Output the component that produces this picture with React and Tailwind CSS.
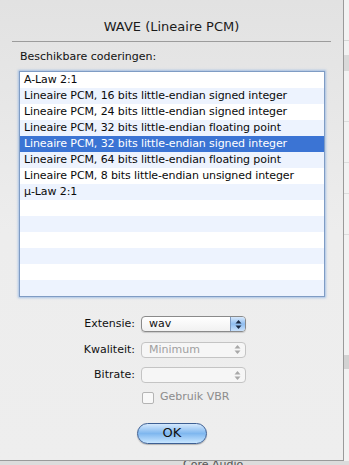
const formats = [
    "A-Law 2:1",
    "Lineaire PCM, 16 bits little-endian signed integer",
    "Lineaire PCM, 24 bits little-endian signed integer",
    "Lineaire PCM, 32 bits little-endian floating point",
    "Lineaire PCM, 32 bits little-endian signed integer",
    "Lineaire PCM, 64 bits little-endian floating point",
    "Lineaire PCM, 8 bits little-endian unsigned integer",
    "μ-Law 2:1",
    "", "", "", "", "", ""
];

const selectedIndex = 4;

function Arrows({ enabled }) {
    return (
        <svg width="7" height="11" viewBox="0 0 7 11">
            <path d="M3.5 1 L6.5 4.5 H0.5 Z" fill={enabled ? "#1b2a44" : "#a8a8a8"} />
            <path d="M3.5 10 L6.5 6.5 H0.5 Z" fill={enabled ? "#1b2a44" : "#a8a8a8"} />
        </svg>
    );
}

function Popup({ value, enabled }) {
    return (
        <div
            className={
                "flex h-[16px] w-[105px] rounded-[4px] border overflow-hidden " +
                (enabled
                    ? "border-[#8a8a8a] bg-gradient-to-b from-white to-[#f1f1f1] shadow-[0_1px_1px_rgba(0,0,0,0.15)]"
                    : "border-[#c4c4c4] bg-[#f6f6f6]")
            }
        >
            <div
                className={
                    "flex-1 pl-[7px] text-[11px] leading-[14px] " +
                    (enabled ? "text-[#111]" : "text-[#a0a0a0]")
                }
            >
                {value}
            </div>
            <div
                className={
                    "w-[15px] flex items-center justify-center " +
                    (enabled
                        ? "bg-gradient-to-b from-[#d7e8fb] via-[#8fbdf0] to-[#c9e1fb] border-l border-[#7d9ac2]"
                        : "")
                }
            >
                <Arrows enabled={enabled} />
            </div>
        </div>
    );
}

function App() {
    return (
        <div
            className="w-[349px] h-[465px] overflow-hidden bg-[#e4e4e4] flex flex-col"
            style={{ fontFamily: "'DejaVu Sans', 'Lucida Grande', sans-serif" }}
        >
            <div className="flex h-[461px]">
                <div className="w-[344px] bg-gradient-to-b from-[#e2e2e2] via-[#ededed] to-[#eeeeee] border-r border-b border-[#9a9a9a] flex flex-col">
                    <div className="h-[41px] flex items-center justify-center pt-[13px] text-[13px] text-[#1a1a1a]">
                        WAVE (Lineaire PCM)
                    </div>

                    <div className="mx-[12px] h-px bg-[#9c9c9c]" />

                    <div className="ml-[20px] mt-[8px] text-[11px] leading-[14px] text-[#111]">
                        Beschikbare coderingen:
                    </div>

                    <div className="ml-[19px] mt-[7px] w-[306px] border border-[#7f9cc4] shadow-[0_0_2px_1px_rgba(120,165,225,0.6)] bg-white">
                        {formats.map((name, i) => (
                            <div
                                key={i}
                                className={
                                    "h-[16px] pl-[4px] text-[11px] leading-[16px] whitespace-nowrap tracking-[-0.1px] " +
                                    (i === selectedIndex
                                        ? "bg-[#3b74d4] text-white"
                                        : i % 2 === 1
                                            ? "bg-[#edf3fe] text-[#0a0a0a]"
                                            : "bg-white text-[#0a0a0a]")
                                }
                            >
                                {name}
                            </div>
                        ))}
                    </div>

                    <div className="mt-[19px] grid grid-cols-[135px_auto] gap-x-[6px] gap-y-[9px] items-center">
                        <div className="text-right text-[11px] text-[#111]">Extensie:</div>
                        <Popup value="wav" enabled />
                        <div className="text-right text-[11px] text-[#111]">Kwaliteit:</div>
                        <Popup value="Minimum" />
                        <div className="text-right text-[11px] text-[#111]">Bitrate:</div>
                        <Popup value="" />
                    </div>

                    <div className="mt-[7px] ml-[142px] flex items-center gap-[6px] h-[14px]">
                        <div className="w-[12px] h-[12px] rounded-[2px] border border-[#b4b4b4] bg-[#f8f8f8]" />
                        <div className="text-[11px] text-[#8c8c8c]">Gebruik VBR</div>
                    </div>

                    <div className="mt-[18px] ml-[137px]">
                        <div className="w-[70px] h-[21px] rounded-full border border-[#3d5f93] bg-gradient-to-b from-[#d4e8fc] via-[#7fb7ef] to-[#c8e6ff] flex items-center justify-center text-[13px] text-[#111] shadow-[0_1px_1px_rgba(0,0,0,0.25)]">
                            OK
                        </div>
                    </div>
                </div>

                <div className="flex-1 bg-[#f2f2f2] flex flex-col">
                    <div className="h-[40px]" />
                    <div className="h-[1px] bg-[#d6d6d6]" />
                    <div className="h-[14px]" />
                    <div className="h-[16px] bg-[#d9d9d9]" />
                    <div className="h-[50px]" />
                    <div className="h-[1px] bg-[#dcdcdc]" />
                    <div className="h-[40px]" />
                    <div className="h-[1px] bg-[#dcdcdc]" />
                    <div className="h-[30px]" />
                    <div className="h-[1px] bg-[#dcdcdc]" />
                    <div className="h-[40px]" />
                    <div className="h-[1px] bg-[#dcdcdc]" />
                    <div className="h-[120px]" />
                    <div className="h-[14px] bg-[#d2d2d2]" />
                </div>
            </div>

            <div className="flex-1 bg-[#dcdcdc] pl-[183px] text-[11px] leading-[8px] text-[#555] overflow-hidden">
                Core Audio
            </div>
        </div>
    );
}

export default App;
